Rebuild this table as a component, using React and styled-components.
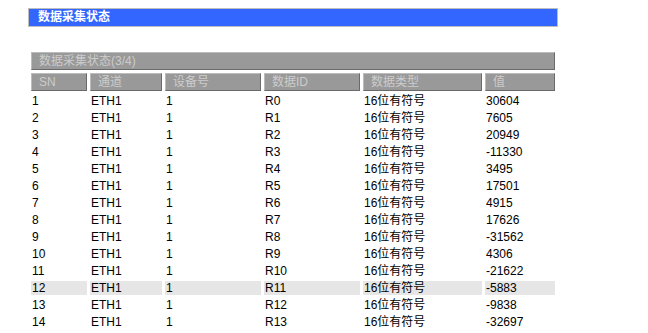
import React from "react";
import styled, { createGlobalStyle } from "styled-components";

const GlobalStyle = createGlobalStyle`
  html, body {
    margin: 0;
    overflow: hidden;
    background: #ffffff;
  }
  body {
    padding: 8px 0 0 28px;
    font-family: "Liberation Sans", "Noto Sans CJK SC", sans-serif;
  }
`;

const Page = styled.div`
  width: 530px;
`;

const TitleBar = styled.div`
  box-sizing: border-box;
  height: 19px;
  background-color: #3366ff;
  border: 1px solid #bdbdbd;
  color: #ffffff;
  font-size: 12px;
  font-weight: bold;
  line-height: 17px;
  padding-left: 9px;
`;

const Table = styled.table`
  margin-top: 22px;
  width: 530px;
  table-layout: fixed;
  border-collapse: separate;
  border-spacing: 3px;
  font-size: 12px;
`;

const HeadCell = styled.th`
  box-sizing: border-box;
  height: 18px;
  padding: 0 0 0 7px;
  background-color: #999999;
  color: #cccccc;
  font-weight: normal;
  text-align: left;
  line-height: 16px;
  border-top: 1px solid #bcbcbc;
  border-left: 1px solid #bcbcbc;
  border-bottom: 1px solid #6a6a6a;
  border-right: 1px solid #6a6a6a;
  white-space: nowrap;
  overflow: hidden;
`;

const Cell = styled.td`
  box-sizing: border-box;
  height: 14px;
  padding: 0 0 0 1px;
  line-height: 14px;
  color: #000000;
  white-space: nowrap;
  background-color: ${({ active }) => (active ? "#e6e6e6" : "transparent")};
`;

const columns = [
  { label: "SN", width: 56 },
  { label: "通道", width: 72 },
  { label: "设备号", width: 96 },
  { label: "数据ID", width: 96 },
  { label: "数据类型", width: 119 },
  { label: "值", width: 70 },
];

const values = [
  30604, 7605, 20949, -11330, 3495, 17501, 4915, 17626, -31562, 4306, -21622,
  -5883, -9838, -32697,
];

const rows = values.map((v, i) => ({
  sn: i + 1,
  channel: "ETH1",
  device: 1,
  id: "R" + i,
  type: "16位有符号",
  value: v,
}));

const App = () => {
  return (
    <Page>
      <GlobalStyle />
      <TitleBar>数据采集状态</TitleBar>
      <Table>
        <colgroup>
          {columns.map((c) => (
            <col key={c.label} style={{ width: c.width }} />
          ))}
        </colgroup>
        <thead>
          <tr>
            <HeadCell colSpan={6}>数据采集状态(3/4)</HeadCell>
          </tr>
          <tr>
            {columns.map((c) => (
              <HeadCell key={c.label}>{c.label}</HeadCell>
            ))}
          </tr>
        </thead>
        <tbody>
          {rows.map((r) => {
            const active = r.sn === 12;
            return (
              <tr key={r.sn}>
                <Cell active={active}>{r.sn}</Cell>
                <Cell active={active}>{r.channel}</Cell>
                <Cell active={active}>{r.device}</Cell>
                <Cell active={active}>{r.id}</Cell>
                <Cell active={active}>{r.type}</Cell>
                <Cell active={active}>{r.value}</Cell>
              </tr>
            );
          })}
        </tbody>
      </Table>
    </Page>
  );
};

export default App;
